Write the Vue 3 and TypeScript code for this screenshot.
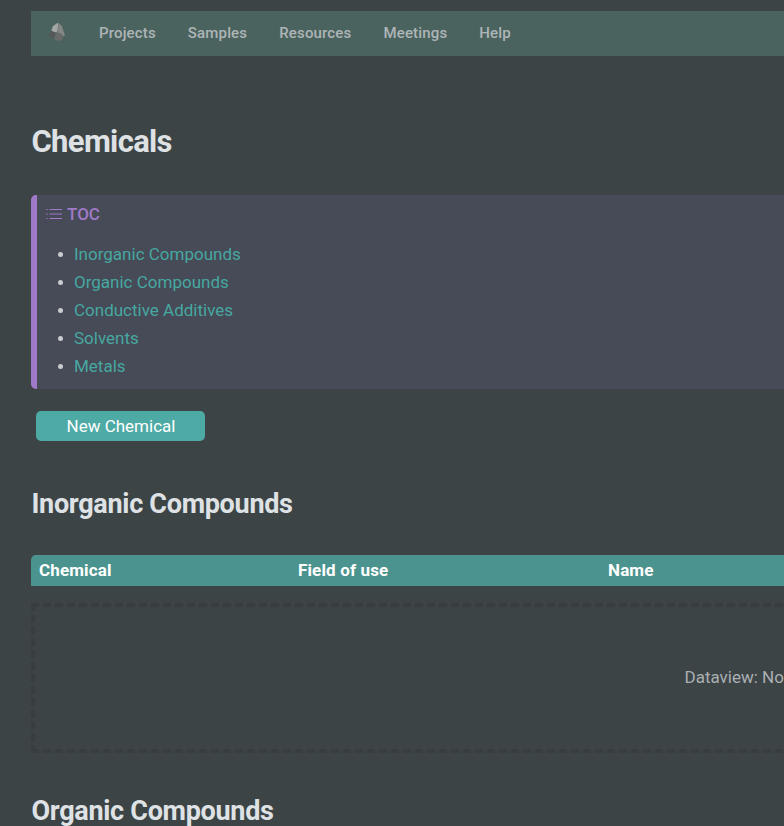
<script setup lang="ts">
interface Section {
  title: string
}

const menu: string[] = ['Projects', 'Samples', 'Resources', 'Meetings', 'Help']
const sections: Section[] = [
  { title: 'Inorganic Compounds' },
  { title: 'Organic Compounds' },
  { title: 'Conductive Additives' },
  { title: 'Solvents' },
  { title: 'Metals' },
]
const columns: string[] = ['Chemical', 'Field of use', 'Name']
</script>

<template>
  <main class="page">
    <nav class="navbar">
      <svg class="logo" viewBox="0 0 18 20" aria-hidden="true">
        <path d="M2.5 8 4 4 8.5 1 9.5 1.5 8.5 9 7 11 3 9.5Z" fill="#a3a6a4" />
        <path d="M9.5 1 13 4 14 8 16 13 14.5 14.5 12 12 8.5 10.5 9.5 5Z" fill="#858786" />
        <path d="M2.5 9 7 10.5 5 16 1 15 0 13Z" fill="#545857" />
        <path d="M7 11 11 11.5 14 13.5 13 18 10 19 5 17.5Z" fill="#686b6a" />
      </svg>
      <a v-for="item in menu" :key="item" class="nav-link">{{ item }}</a>
    </nav>

    <h1 class="title">Chemicals</h1>

    <section class="toc">
      <div class="toc-title">
        <svg class="toc-icon" viewBox="0 0 16 12" aria-hidden="true">
          <path d="M4 1.5H15.5M4 6H15.5M4 10.5H15.5M.7 1.5H1.2M.7 6H1.2M.7 10.5H1.2" />
        </svg>
        <span>TOC</span>
      </div>
      <ul class="toc-list">
        <li v-for="section in sections" :key="section.title">
          <a>{{ section.title }}</a>
        </li>
      </ul>
    </section>

    <button class="new-button" type="button">New Chemical</button>

    <h2 class="heading">{{ sections[0].title }}</h2>
    <div class="table-head">
      <span v-for="column in columns" :key="column">{{ column }}</span>
    </div>
    <div class="empty-box">Dataview: No</div>

    <h2 class="heading second">{{ sections[1].title }}</h2>
  </main>
</template>

<style>
body {
  background: #3d4446;
  overflow: hidden;
}
</style>

<style scoped>
.page {
  box-sizing: border-box;
  width: 100%;
  height: 826px;
  padding: 11px 0 0 31px;
  overflow: hidden;
  background: #3d4446;
  color: #dfe2e5;
  font-family: Roboto, sans-serif;
  font-size: 17px;
}
.navbar {
  display: flex;
  align-items: center;
  gap: 32px;
  height: 45px;
  padding-left: 18px;
  background: #4b635e;
}
.logo {
  width: 18px;
  height: 20px;
  margin-top: -3px;
}
.nav-link {
  color: #adb5b7;
  font-size: 15px;
  font-weight: 500;
  line-height: 20px;
  letter-spacing: 0.16px;
  margin-top: -1px;
}
.title {
  margin: 66px 0 0;
  padding-left: 0.5px;
  font-size: 31px;
  font-weight: 700;
  line-height: 40px;
  letter-spacing: -0.66px;
}
.toc {
  box-sizing: border-box;
  height: 194px;
  margin-top: 33px;
  padding: 9px 0 0 9px;
  border-left: 6px solid #9f7ac8;
  border-radius: 5px 0 0 5px;
  background: #474a57;
}
.toc-title {
  display: flex;
  align-items: center;
  gap: 5px;
  height: 20px;
  color: #9f7ac8;
  font-weight: 500;
}
.toc-icon {
  width: 16px;
  height: 12px;
}
.toc-icon path {
  fill: none;
  stroke: currentColor;
  stroke-width: 1.2;
  stroke-linecap: round;
}
.toc-list {
  margin: 16px 0 0;
  padding-left: 12px;
  line-height: 28px;
  list-style: none;
}
.toc-list li {
  display: flex;
  align-items: center;
  gap: 11px;
}
.toc-list li::before {
  content: '';
  width: 5px;
  height: 5px;
  border-radius: 50%;
  background: #c9cccf;
}
.toc-list a {
  color: #46a8a0;
}
.new-button {
  display: block;
  width: 169px;
  height: 30px;
  margin: 22px 0 0 5px;
  padding: 0 0 0 1px;
  border: 0;
  border-radius: 5px;
  background: #4daaa5;
  color: #fff;
  font: 400 17px/30px Roboto, sans-serif;
}
.heading {
  margin: 45px 0 0;
  padding-left: 0.5px;
  font-size: 27px;
  font-weight: 700;
  line-height: 36px;
  letter-spacing: -0.3px;
}
.table-head {
  display: grid;
  grid-template-columns: 259px 310px 1fr;
  height: 31px;
  margin-top: 33px;
  padding-left: 8px;
  border-top-left-radius: 5px;
  background: #4b938e;
  color: #fff;
  font-weight: 700;
  line-height: 31px;
  letter-spacing: 0.14px;
}
.empty-box {
  display: flex;
  align-items: center;
  box-sizing: border-box;
  width: 1652px;
  height: 150px;
  margin-top: 17px;
  padding: 0 0 2px 649.5px;
  border: 4px dashed #383d41;
  color: #aab0b4;
}
.second {
  margin-top: 40px;
}
</style>
